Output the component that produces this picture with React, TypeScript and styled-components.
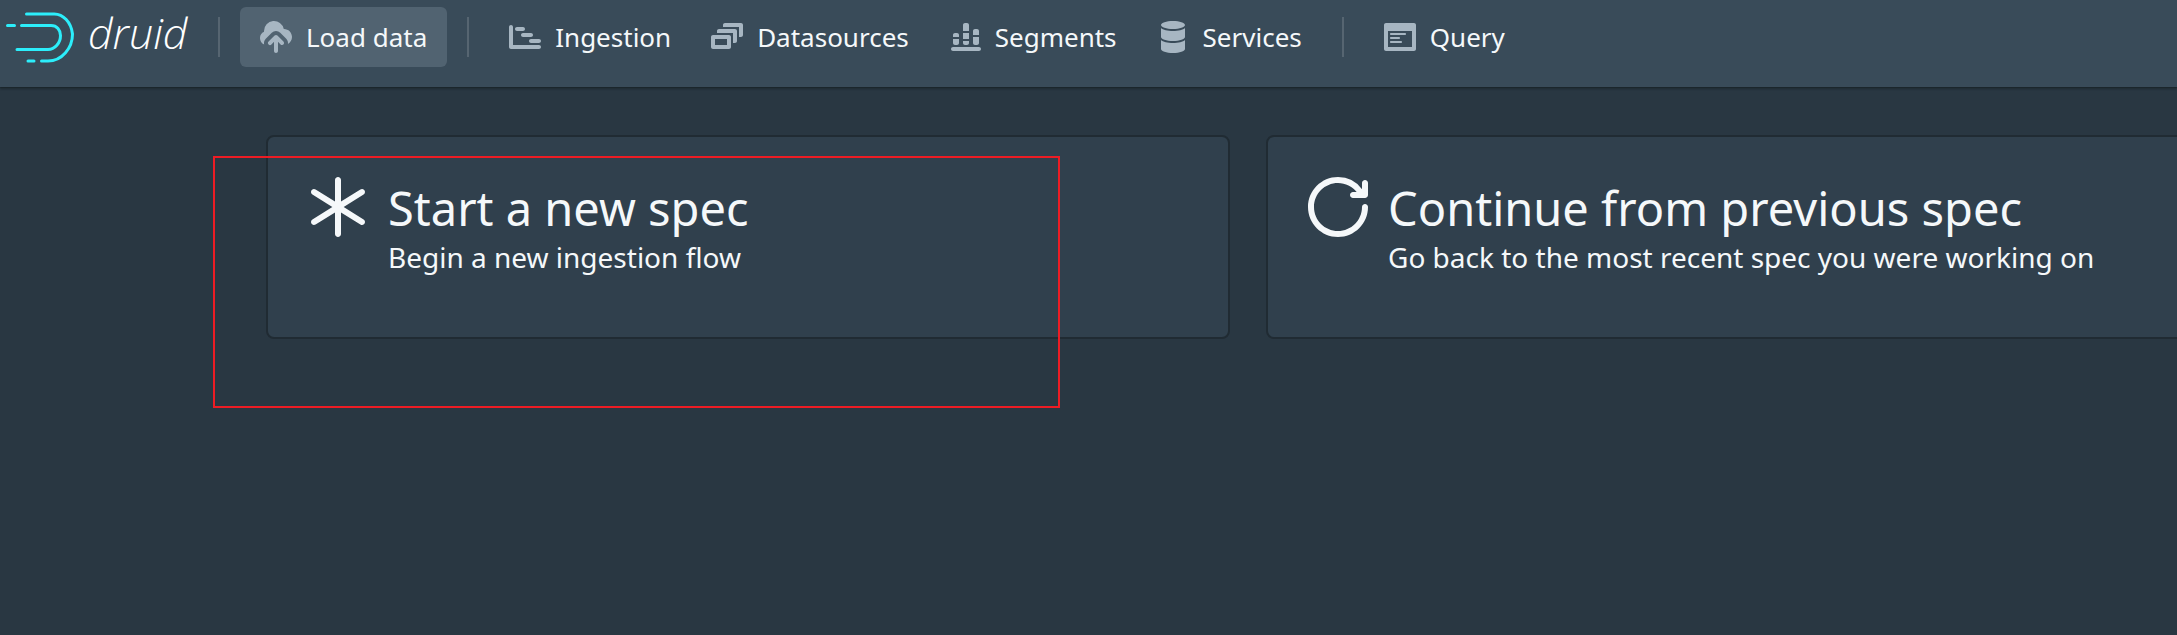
import React from "react";
import styled, { createGlobalStyle } from "styled-components";

const GlobalStyle = createGlobalStyle`
  *, *::before, *::after { box-sizing: border-box; }
  body {
    margin: 0;
    min-height: 100vh;
    overflow-x: hidden;
    background: #293742;
    color: #f5f8fa;
    font-family: "Noto Sans", "Segoe UI", sans-serif;
  }
`;

const Navbar = styled.header`
  display: flex;
  align-items: flex-start;
  height: 87px;
  padding-top: 7px;
  background: #394b59;
  box-shadow: 0 2px 2px rgba(16, 22, 26, 0.4), 0 0 0 1px rgba(16, 22, 26, 0.2);
`;

const Brand = styled.a`
  display: flex;
  align-items: center;
  gap: 12px;
  width: 198px;
  height: 60px;
  padding-left: 4px;
  color: #ffffff;
  text-decoration: none;
`;

const LogoMark = styled.svg`
  flex: none;
  width: 72px;
  height: 54px;
`;

const Wordmark = styled.span`
  padding-bottom: 8px;
  font: italic 300 43px/52px "Open Sans", sans-serif;
`;

const NavGroup = styled.nav`
  display: flex;
  align-items: center;
  height: 60px;
`;

const Divider = styled.span`
  width: 2px;
  height: 40px;
  margin: 0 20px;
  background: rgba(255, 255, 255, 0.15);
`;

const NavButton = styled.button<{ $active?: boolean }>`
  display: flex;
  align-items: center;
  gap: 14px;
  height: 60px;
  padding: 0 20px;
  border: 0;
  border-radius: 6px;
  background: ${(p) => (p.$active ? "rgba(138, 155, 168, 0.3)" : "transparent")};
  color: inherit;
  font: inherit;
  font-size: 26px;
  line-height: 36px;
  white-space: nowrap;
  cursor: pointer;
`;

const NavIcon = styled.svg`
  flex: none;
  width: 32px;
  height: 32px;
  fill: #a7b6c2;
`;

const Main = styled.main`
  position: relative;
  padding: 48px 0 48px 266px;
`;

const Cards = styled.div`
  display: grid;
  grid-template-columns: repeat(2, minmax(964px, 1fr));
  gap: 36px;
`;

const Card = styled.button`
  display: flex;
  align-items: flex-start;
  gap: 20px;
  min-height: 204px;
  padding: 40px;
  border: 2px solid #202b33;
  border-radius: 8px;
  background: #30404d;
  color: inherit;
  font: inherit;
  text-align: left;
  cursor: pointer;
`;

const CardIcon = styled.svg`
  flex: none;
  width: 60px;
  height: 60px;
  fill: currentColor;
`;

const CardTitle = styled.span`
  display: block;
  font-size: 47px;
  line-height: 62px;
  white-space: nowrap;
`;

const CardText = styled.span`
  display: block;
  font-size: 28px;
  line-height: 36px;
  white-space: nowrap;
`;

const Highlight = styled.div`
  position: absolute;
  top: 69px;
  left: 213px;
  width: 847px;
  height: 252px;
  border: 2px solid #ed1c24;
  pointer-events: none;
`;

const icons = {
  upload:
    "M8.71 7.29C8.53 7.11 8.28 7 8 7s-.53.11-.71.29l-3 3a1.003 1.003 0 001.42 1.42L7 10.41V15c0 .55.45 1 1 1s1-.45 1-1v-4.59l1.29 1.29c.18.19.43.3.71.3a1.003 1.003 0 00.71-1.71l-3-3zM12 4c-.03 0-.07 0-.1.01A5 5 0 002 5c0 .11.01.22.02.33a3.495 3.495 0 00.07 6.37c-.05-.23-.09-.46-.09-.7 0-.83.34-1.58.88-2.12l3-3a2.993 2.993 0 014.24 0l3 3c.54.54.88 1.29.88 2.12 0 .16-.02.32-.05.47C15.17 10.78 16 9.5 16 8c0-2.21-1.79-4-4-4z",
  gantt:
    "M4 5h3c.55 0 1-.45 1-1s-.45-1-1-1H4c-.55 0-1 .45-1 1s.45 1 1 1zm3 1c-.55 0-1 .45-1 1s.45 1 1 1h4c.55 0 1-.45 1-1s-.45-1-1-1H7zm8 6H2V3c0-.55-.45-1-1-1s-1 .45-1 1v10c0 .55.45 1 1 1h14c.55 0 1-.45 1-1s-.45-1-1-1zm-5-2c0 .55.45 1 1 1h4c.55 0 1-.45 1-1s-.45-1-1-1h-4c-.55 0-1 .45-1 1z",
  multi:
    "M12 3.98H4c-.55 0-1 .45-1 1v1h8v5h1c.55 0 1-.45 1-1v-5c0-.55-.45-1-1-1zm3-3H7c-.55 0-1 .45-1 1v1h8v5h1c.55 0 1-.45 1-1v-5c0-.55-.45-1-1-1zm-6 6H1c-.55 0-1 .45-1 1v5c0 .55.45 1 1 1h8c.55 0 1-.45 1-1v-5c0-.55-.45-1-1-1zm-1 5H2v-3h6v3z",
  stacked:
    "M10 2c0-.55-.45-1-1-1H8c-.55 0-1 .45-1 1v3h3V2zm3 10h1c.55 0 1-.45 1-1V8h-3v3c0 .55.45 1 1 1zm2-7c0-.55-.45-1-1-1h-1c-.55 0-1 .45-1 1v2h3V5zm-5 1H7v3h3V6zM5 7c0-.55-.45-1-1-1H3c-.55 0-1 .45-1 1v1h3V7zm3 5h1c.55 0 1-.45 1-1v-1H7v1c0 .55.45 1 1 1zm7 1H2c-.55 0-1 .45-1 1s.45 1 1 1h13c.55 0 1-.45 1-1s-.45-1-1-1zM3 12h1c.55 0 1-.45 1-1V9H2v2c0 .55.45 1 1 1z",
  database:
    "M8 4c3.31 0 6-.9 6-2s-2.69-2-6-2C4.68 0 2 .9 2 2s2.68 2 6 2zm-6-.52V8c0 1.1 2.69 2 6 2s6-.9 6-2V3.48C13.03 4.4 10.67 5 8 5s-5.03-.6-6-1.52zm0 6V14c0 1.1 2.69 2 6 2s6-.9 6-2V9.48C13.03 10.4 10.67 11 8 11s-5.03-.6-6-1.52z",
  application:
    "M3.5 7h7c.28 0 .5-.22.5-.5s-.22-.5-.5-.5h-7c-.28 0-.5.22-.5.5s.22.5.5.5zm0 2h4c.28 0 .5-.22.5-.5S7.78 8 7.5 8h-4c-.28 0-.5.22-.5.5s.22.5.5.5zm0 2h5c.28 0 .5-.22.5-.5s-.22-.5-.5-.5h-5c-.28 0-.5.22-.5.5s.22.5.5.5zM15 1H1c-.55 0-1 .45-1 1v12c0 .55.45 1 1 1h14c.55 0 1-.45 1-1V2c0-.55-.45-1-1-1zm-1 12H2V5h12v8z",
  asterisk:
    "M18.52 14.17l.01-.02L11.89 10l6.64-4.15-.01-.02A.97.97 0 0019 5c0-.55-.45-1-1-1-.2 0-.37.07-.52.17l-.01-.02L11 8.2V1c0-.55-.45-1-1-1S9 .45 9 1v7.2L2.53 4.15l-.01.02A.922.922 0 002 4c-.55 0-1 .45-1 1 0 .36.2.66.48.83l-.01.02L8.11 10l-6.64 4.15.01.02A.97.97 0 001 15c0 .55.45 1 1 1 .2 0 .37-.07.52-.17l.01.02L9 11.8V19c0 .55.45 1 1 1s1-.45 1-1v-7.2l6.47 4.04.01-.02c.15.11.32.18.52.18.55 0 1-.45 1-1 0-.36-.2-.66-.48-.83z",
  repeat:
    "M19 9c-.55 0-1 .45-1 1 0 4.42-3.58 8-8 8s-8-3.58-8-8 3.58-8 8-8c2.52 0 4.76 1.18 6.22 3H15c-.55 0-1 .45-1 1s.45 1 1 1h4c.55 0 1-.45 1-1V2c0-.55-.45-1-1-1s-1 .45-1 1v2.05A9.958 9.958 0 0010 0C4.48 0 0 4.48 0 10s4.48 10 10 10 10-4.48 10-10c0-.55-.45-1-1-1z",
};

type IconName = keyof typeof icons;

function NavItem({ icon, label, active }: { icon: IconName; label: string; active?: boolean }) {
  return (
    <NavButton type="button" $active={active} aria-current={active ? "page" : undefined}>
      <NavIcon viewBox="0 0 16 16" aria-hidden="true">
        <path d={icons[icon]} fillRule="evenodd" />
      </NavIcon>
      {label}
    </NavButton>
  );
}

function SpecCard({ icon, title, text }: { icon: IconName; title: string; text: string }) {
  return (
    <Card type="button">
      <CardIcon viewBox="0 0 20 20" aria-hidden="true">
        <path d={icons[icon]} />
      </CardIcon>
      <span>
        <CardTitle>{title}</CardTitle>
        <CardText>{text}</CardText>
      </span>
    </Card>
  );
}

export default function App() {
  return (
    <>
      <GlobalStyle />
      <Navbar>
        <Brand href="#">
          <LogoMark viewBox="4 10 72 54" aria-hidden="true">
            <g fill="none" stroke="#2ceefb" strokeWidth="3" strokeLinecap="round">
              <path d="M26.500 14H54a18.500 23.500 0 0 1 18.500 20C72.500 48 62 61 48 61H41.500" />
              <path d="M21.500 25.500H51C57 25.500 60.500 30 60.500 35.500C60.500 43 55 49.500 48 49.500H17" />
              <path d="M7.500 25.500H14.500M28 61H34" />
            </g>
          </LogoMark>
          <Wordmark>druid</Wordmark>
        </Brand>
        <NavGroup>
          <Divider />
          <NavItem icon="upload" label="Load data" active />
          <Divider />
          <NavItem icon="gantt" label="Ingestion" />
          <NavItem icon="multi" label="Datasources" />
          <NavItem icon="stacked" label="Segments" />
          <NavItem icon="database" label="Services" />
          <Divider />
          <NavItem icon="application" label="Query" />
        </NavGroup>
      </Navbar>
      <Main>
        <Cards>
          <SpecCard icon="asterisk" title="Start a new spec" text="Begin a new ingestion flow" />
          <SpecCard
            icon="repeat"
            title="Continue from previous spec"
            text="Go back to the most recent spec you were working on"
          />
        </Cards>
        <Highlight />
      </Main>
    </>
  );
}
